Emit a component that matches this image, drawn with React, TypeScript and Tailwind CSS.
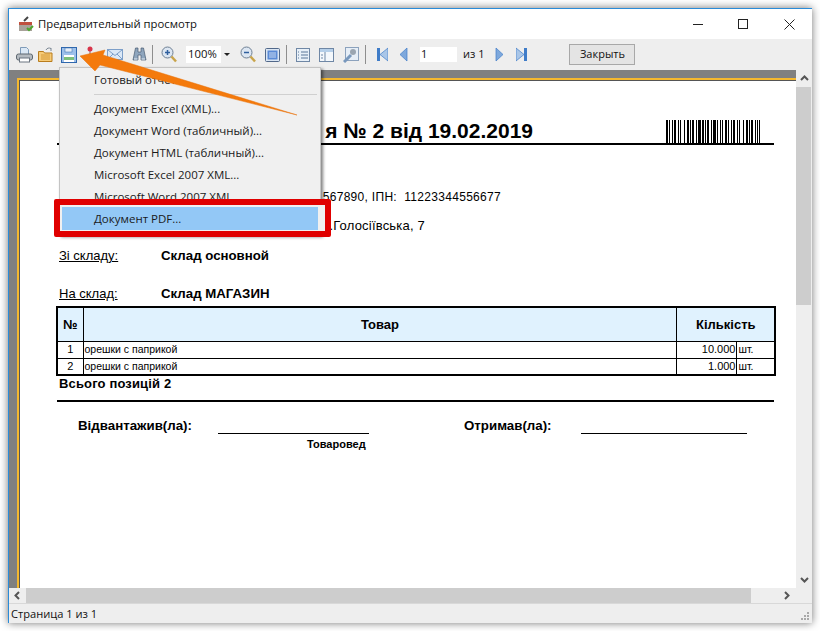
const menuItems = [
  "Документ Excel (XML)...",
  "Документ Word (табличный)...",
  "Документ HTML (табличный)...",
  "Microsoft Excel 2007 XML...",
  "Microsoft Word 2007 XML...",
];

const uiFont = "[font-family:'Open_Sans','Noto_Sans',sans-serif]";

function Printer() {
  return (
    <svg width="17" height="16" viewBox="0 0 17 16" className="ml-[7px]">
      <path d="M4.500 0.500h6l2 2v6h-8z" fill="#dbe8f5" stroke="#7f9bb8" />
      <rect x="0.500" y="7" width="16" height="6" rx="2" fill="#b4bac0" stroke="#5f6870" />
      <rect x="3.500" y="11" width="10" height="4" fill="#fff" stroke="#6b7580" />
    </svg>
  );
}

function Folder() {
  return (
    <svg width="16" height="16" viewBox="0 0 16 16" className="ml-[5px]">
      <path d="M0.500 4.500h5l1 1.500h7.500v8.500H0.500z" fill="#f6cb78" stroke="#b97c1c" />
      <path d="M3 8h9M3 10h9M3 12h9" stroke="#d69a38" />
      <path d="M8 3c1-2 3-2.500 5-1.500M13 1v3" fill="none" stroke="#7a8794" />
    </svg>
  );
}

function Save() {
  return (
    <svg width="16" height="16" viewBox="0 0 16 16" className="ml-[7px]">
      <rect x="0.500" y="0.500" width="15" height="15" fill="#9dc0ea" stroke="#2f67ad" />
      <rect x="4" y="1" width="7" height="4" fill="#e6eef8" stroke="#2f67ad" strokeWidth="0.500" />
      <rect x="3" y="8" width="10" height="7" fill="#fff" />
      <rect x="3" y="10" width="10" height="3" fill="#7cc07c" />
    </svg>
  );
}

function Pin() {
  return (
    <svg width="6" height="12" viewBox="0 0 6 12" className="ml-[10px] -translate-y-[3px]">
      <path d="M3 5v7" stroke="#8a5a5a" />
      <circle cx="3" cy="3" r="2.500" fill="#d8344a" />
    </svg>
  );
}

function Mail() {
  return (
    <svg width="16" height="11" viewBox="0 0 16 11" className="ml-[14px]">
      <rect x="0.500" y="0.500" width="15" height="10" fill="#dbe8f7" stroke="#7d9fc9" />
      <path d="M1 1l7 5.500 7-5.500M1 10l5-5M15 10l-5-5" fill="none" stroke="#7d9fc9" />
    </svg>
  );
}

function Binoculars() {
  return (
    <svg width="15" height="15" viewBox="0 0 15 15" className="ml-[9px]">
      <path d="M3.500 1h2.500v4h3V1h2.500l2.500 12H9V8H6v5H1z" fill="#8ea5bd" stroke="#475a70" strokeWidth="0.700" />
      <path d="M2 12h3.500M9.500 12H13" stroke="#e6edf4" />
    </svg>
  );
}

function Loupe({ plus, className }: { plus?: boolean; className: string }) {
  return (
    <svg width="16" height="17" viewBox="0 0 16 17" className={className}>
      <circle cx="6.500" cy="6.500" r="5.500" fill="#dce6f2" stroke="#6d7f93" />
      <path d="M10.500 10.500l4.500 5" stroke="#c9a44a" strokeWidth="2.500" />
      <path d={plus ? "M4 6.500h5M6.500 4v5" : "M4 6.500h5"} stroke="#2f5f9e" strokeWidth="1.500" />
    </svg>
  );
}

function Separator({ className }: { className: string }) {
  return <div className={`h-[19px] w-px bg-[#8e8e8e] ${className}`} />;
}

function PageIcon() {
  return (
    <svg width="15" height="14" viewBox="0 0 15 14" className="ml-[9px]">
      <rect x="0.500" y="0.500" width="14" height="13" rx="1" fill="#dbe6f3" stroke="#51688a" />
      <rect x="2.500" y="2.500" width="10" height="9" fill="#5a8ad6" />
      <path d="M4 5h7M4 7h7M4 9h7" stroke="#c8daf2" />
    </svg>
  );
}

function Outline() {
  return (
    <svg width="14" height="14" viewBox="0 0 14 14" className="ml-[9px]">
      <rect x="0.500" y="0.500" width="13" height="13" fill="#e8f0f8" stroke="#6f87a5" />
      <path d="M2 4h1M2 7h1M2 10h1M5 4h7M5 7h7M5 10h7" stroke="#5b7698" />
    </svg>
  );
}

function Columns() {
  return (
    <svg width="15" height="14" viewBox="0 0 15 14" className="ml-[9px]">
      <rect x="0.500" y="0.500" width="14" height="13" fill="#f4f8fc" stroke="#6f87a5" />
      <rect x="1" y="1" width="13" height="3" fill="#b5cfe9" />
      <path d="M6 4v9M2 7h2M2 10h2" stroke="#6f87a5" />
    </svg>
  );
}

function Wrench() {
  return (
    <svg width="16" height="16" viewBox="0 0 16 16" className="ml-[9px]">
      <rect x="2.500" y="0.500" width="13" height="13" fill="#e6eef7" stroke="#8ca2bd" />
      <path d="M1 15l7-7" stroke="#7898bd" strokeWidth="3" />
      <circle cx="10" cy="5" r="3" fill="#9aa5b1" />
    </svg>
  );
}

function NavArrow({ dir, bar, className }: { dir: "l" | "r"; bar?: boolean; className: string }) {
  const tri = dir === "l" ? "M8 1v13L1 7.500z" : "M1 1v13l7-6.500z";
  return (
    <svg width={bar ? 11 : 9} height="15" viewBox={bar ? "0 0 11 15" : "0 0 9 15"} className={className}>
      {bar ? (
        <>
          <rect x={dir === "l" ? 0 : 8} y="1" width="3" height="13" fill="#3f7cc8" />
          <path d={dir === "l" ? "M11 1v13L3 7.500z" : "M0 1v13l8-6.500z"} fill="#a9c6e8" stroke="#3f7cc8" strokeWidth="0.700" />
        </>
      ) : (
        <path d={tri} fill="#7ea8dc" stroke="#3f7cc8" strokeWidth="0.700" />
      )}
    </svg>
  );
}

const barBase = [2, 1, 1, 2, 1, 1, 2, 2, 1, 1, 1, 3, 1, 2, 2, 1, 1, 1, 2, 2, 1, 1, 3, 1, 2, 1, 1, 1, 2, 2, 1, 1, 3, 1, 1, 2, 1, 1, 1, 2];
const bars = [...barBase, ...barBase.slice(0, 22), 1, 1, 1];

function Barcode() {
  let x = 0;
  return (
    <svg width="94" height="23" viewBox="0 0 94 23" className="ml-[133px]">
      {bars.map((w, i) => {
        const left = x;
        x += w;
        return i % 2 === 0 ? <rect key={i} x={left} y="0" width={w} height="23" fill="#000" /> : null;
      })}
    </svg>
  );
}

function Chevron({ d, className }: { d: string; className: string }) {
  return (
    <svg width="9" height="9" viewBox="0 0 9 9" className={className}>
      <path d={d} fill="none" stroke="#555" strokeWidth="2" />
    </svg>
  );
}

export default function App() {
  return (
    <div className="relative h-[631px] w-[820px] overflow-hidden bg-white">
      {/* window */}
      <div className={`ml-[8px] mt-[8px] flex h-[615px] w-[804px] flex-col border-l border-t border-[#2a8bd8] bg-white text-[#111] shadow-[0_0_8px_rgba(0,0,0,0.55)] ${uiFont}`}>
        {/* title bar */}
        <div className="flex h-[30px] shrink-0 items-center">
          <svg width="17" height="16" viewBox="0 0 17 16" className="ml-[9px]">
            <path d="M1 6h13v9H1z" fill="#a8a29a" />
            <path d="M1 6h13v3H1z" fill="#c0503e" />
            <path d="M6 5l4-4" stroke="#444" strokeWidth="2" />
            <path d="M9 12l2 2 4-4" fill="none" stroke="#4ea72e" strokeWidth="2" />
          </svg>
          <span className="ml-[3px] text-[11.3px] leading-none">Предварительный просмотр</span>
          <div className="ml-auto flex items-center">
            <div className="h-px w-[10px] bg-[#222]" />
            <div className="ml-[35px] h-[10px] w-[10px] border border-[#222]" />
            <svg width="11" height="11" viewBox="0 0 11 11" className="ml-[36px] mr-[17px]">
              <path d="M0.500 0.500l10 10M10.500 0.500l-10 10" stroke="#222" />
            </svg>
          </div>
        </div>

        {/* toolbar */}
        <div className="flex h-[31px] shrink-0 items-center bg-[#eeeeee]">
          <Printer />
          <Folder />
          <Save />
          <Pin />
          <Mail />
          <Binoculars />
          <Separator className="ml-[5px]" />
          <Loupe plus className="ml-[8px]" />
          <div className="ml-[9px] flex h-[17px] w-[47px] items-center bg-white pl-[2px] text-[11.3px]">
            100%
            <span className="ml-auto flex h-full w-[12px] items-center justify-center bg-[#eeeeee]">
              <span className="h-0 w-0 border-x-[3px] border-t-[3px] border-x-transparent border-t-[#222]" />
            </span>
          </div>
          <Loupe className="ml-[7px]" />
          <PageIcon />
          <Separator className="ml-[6px]" />
          <Outline />
          <Columns />
          <Wrench />
          <Separator className="ml-[6px]" />
          <NavArrow dir="l" bar className="ml-[11px]" />
          <NavArrow dir="l" className="ml-[11px]" />
          <div className="ml-[12px] flex h-[15px] w-[37px] items-center bg-white pl-[1px] text-[11px]">1</div>
          <span className="ml-[6px] text-[11px]">из 1</span>
          <NavArrow dir="r" className="ml-[11px]" />
          <NavArrow dir="r" bar className="ml-[12px]" />
          <div className="ml-[42px] flex h-[21px] w-[66px] items-center justify-center border border-[#a8a8a8] bg-[#e4e4e4] text-[11px]">
            Закрыть
          </div>
        </div>

        {/* preview + vertical scrollbar */}
        <div className="flex h-[518px] shrink-0">
          <div className="w-[787px] overflow-hidden bg-[#808080] pl-[8px] pt-[8px]">
            <div className="h-full border-l-2 border-t-2 border-[#f5b82e]">
              <div className="h-full border-l border-t border-[#555] bg-white pl-[37px] font-['Liberation_Sans',sans-serif] text-black">
                <div className="mt-[38px] flex h-[24px] items-end">
                  <div className="w-[476px] whitespace-nowrap text-right text-[21px] font-bold leading-[24px]">
                    я № 2 від 19.02.2019
                  </div>
                  <Barcode />
                </div>
                <div className="h-[2px] w-[717px] bg-black" />

                <div className="mt-[44px] w-[444px] whitespace-nowrap text-right text-[12px] leading-[16px] tracking-[0.3px]">
                  567890, ІПН:&nbsp; 11223344556677
                </div>
                <div className="mt-[13px] w-[368px] whitespace-nowrap text-right text-[13px] leading-[16px] tracking-[0.2px]">
                  .Голосіївська, 7
                </div>

                <div className="mt-[14px] flex h-[16px] items-center text-[13px]">
                  <span className="ml-[2px] w-[102px] underline">Зі складу:</span>
                  <span className="text-[13.25px] font-bold">Склад основной</span>
                </div>
                <div className="mt-[22px] flex h-[16px] items-center text-[13px]">
                  <span className="ml-[2px] w-[102px] underline">На склад:</span>
                  <span className="text-[13.25px] font-bold">Склад МАГАЗИН</span>
                </div>

                <table className="-ml-px mt-[4px] h-[70px] w-[720px] table-fixed border-collapse border-2 border-black">
                  <colgroup>
                    <col className="w-[26px]" />
                    <col />
                    <col className="w-[60px]" />
                    <col className="w-[38px]" />
                  </colgroup>
                  <thead>
                    <tr className="h-[34px] bg-[#e0f2fe] text-[13px] font-bold">
                      <th className="border border-black">№</th>
                      <th className="border border-black">Товар</th>
                      <th colSpan={2} className="border border-black">Кількість</th>
                    </tr>
                  </thead>
                  <tbody className="text-[10.5px] leading-none">
                    <tr className="h-[16px]">
                      <td className="border border-black text-center text-[11px]">1</td>
                      <td className="border border-black pl-px">орешки с паприкой</td>
                      <td className="border border-black pr-px text-right text-[11px]">10.000</td>
                      <td className="border border-black pl-px">шт.</td>
                    </tr>
                    <tr className="h-[16px]">
                      <td className="border border-black text-center text-[11px]">2</td>
                      <td className="border border-black pl-px">орешки с паприкой</td>
                      <td className="border border-black pr-px text-right text-[11px]">1.000</td>
                      <td className="border border-black pl-px">шт.</td>
                    </tr>
                  </tbody>
                </table>

                <div className="ml-[2px] text-[13px] font-bold leading-[16px] tracking-[0.15px]">Всього позицій 2</div>
                <div className="mt-[8px] h-[2px] w-[717px] bg-black" />

                <div className="mt-[15px] flex h-[18px] items-center text-[13.3px] font-bold">
                  <span className="ml-[21px] w-[140px]">Відвантажив(ла):</span>
                  <span className="h-[1px] w-[151px] translate-y-[7px] bg-black" />
                  <span className="ml-[95px] w-[117px]">Отримав(ла):</span>
                  <span className="h-[1px] w-[166px] translate-y-[7px] bg-black" />
                </div>
                <div className="ml-[250px] mt-[2px] text-[11px] font-bold leading-[14px]">Товаровед</div>
              </div>
            </div>
          </div>
          <div className="flex w-[16px] flex-col bg-[#eeeeee]">
            <div className="flex h-[17px] items-center justify-center">
              <Chevron d="M1 6l3.500-3.500L8 6" className="" />
            </div>
            <div className="h-[218px] w-[15px] bg-[#cdcdcd]" />
            <div className="mt-auto flex h-[17px] items-center justify-center">
              <Chevron d="M1 3l3.500 3.500L8 3" className="" />
            </div>
          </div>
        </div>

        {/* horizontal scrollbar */}
        <div className="flex h-[15px] shrink-0 items-center bg-[#eeeeee]">
          <div className="flex w-[17px] justify-center">
            <Chevron d="M6 1L2.500 4.500 6 8" className="" />
          </div>
          <div className="h-full w-[725px] bg-[#cdcdcd]" />
          <Chevron d="M3 1l3.500 3.500L3 8" className="ml-[31px]" />
        </div>

        {/* status bar */}
        <div className="relative flex min-h-0 flex-1 items-center border-t border-[#d8d8d8] bg-[#eeeeee] pl-[2px] pt-px text-[11.1px]">
          Страница 1 из 1
          <svg width="9" height="9" viewBox="0 0 9 9" className="absolute bottom-[2px] right-[2px]">
            <path d="M6 0h2v2H6zM3 3h2v2H3zM6 3h2v2H6zM0 6h2v2H0zM3 6h2v2H3zM6 6h2v2H6z" fill="#a8a8a8" />
          </svg>
        </div>
      </div>

      {/* save menu */}
      <div className={`absolute left-[59px] top-[67px] h-[168px] w-[262px] border border-[#c4c4c4] bg-[#f0f0f0] pl-[34px] text-[11.5px] leading-[22px] text-[#1a1a1a] shadow-[2px_2px_3px_rgba(0,0,0,0.5)] ${uiFont}`}>
        <div className="mt-[1px] h-[22px]">Готовый отчет...</div>
        <div className="my-[3px] mr-[3px] h-px bg-[#d0d0d0]" />
        <div className="mt-[3px]">
          {menuItems.map((item) => (
            <div key={item} className="h-[22px] whitespace-nowrap">{item}</div>
          ))}
        </div>
      </div>

      {/* red callout around the PDF row */}
      <div className={`absolute left-[54px] top-[199px] h-[38px] w-[277px] rounded-[2px] border-[6px] border-[#e00000] bg-[#f0f0f0] ${uiFont}`}>
        <div className="ml-[2px] mt-[2px] flex h-[23px] w-[256px] items-center bg-[#93c8f6] pl-[32px] pt-px text-[11.5px] text-[#1a1a1a]">
          Документ PDF...
        </div>
      </div>

      {/* orange arrow */}
      <svg width="320" height="130" viewBox="0 0 320 130" className="absolute left-0 top-0">
        <path d="M80 56L105 50 103 55 297 115 100 65 95 71z" fill="#f47a0c" stroke="#e8730c" strokeWidth="0.500" />
      </svg>
    </div>
  );
}
